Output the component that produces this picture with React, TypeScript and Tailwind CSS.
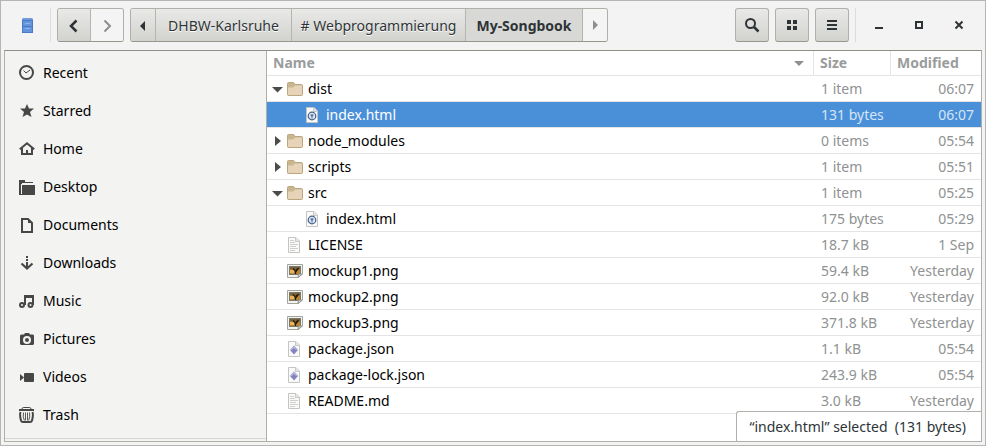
import type { ReactNode } from "react";

type IconName = "recent" | "starred" | "home" | "desktop" | "documents" | "downloads" | "music" | "pictures" | "videos" | "trash";

const placeArt: Record<IconName, ReactNode> = {
  recent: (
    <>
      <circle cx="7.5" cy="7.5" r="6.5" fill="none" stroke="currentColor" strokeWidth="2" />
      <path d="M4.5 5.5 7 8l4-3" fill="none" stroke="currentColor" strokeWidth="1" />
    </>
  ),
  starred: <path d="M8 1l2 4.500h5l-4 3.500 1.500 5L8 11.500 3.500 14 5 9 1 5.500h5z" />,
  home: (
    <>
      <path d="M.8 8.300 8 2.200l7.200 6.100" fill="none" stroke="currentColor" strokeWidth="2" />
      <path d="M3 7v6h10V7" fill="none" stroke="currentColor" strokeWidth="2" />
      <path d="M7 9h2v4H7z" />
    </>
  ),
  desktop: (
    <>
      <path d="M0 1h6v2h8v1H3v1H2v11H0z" />
      <path d="M3 6h13v10H0v-1h3z" />
    </>
  ),
  documents: (
    <>
      <path d="M3 2h6l4 4v9H3z" fill="none" stroke="currentColor" strokeWidth="2" />
      <path d="M9 2v4h4z" />
    </>
  ),
  downloads: (
    <>
      <path d="M7 1h2v2H7zM7 4h2v2H7zM7 7h2v5H7z" />
      <path d="M2.500 8.500l5.500 5 5.500-5" fill="none" stroke="currentColor" strokeWidth="2.200" />
    </>
  ),
  music: (
    <>
      <circle cx="3" cy="12" r="2" fill="none" stroke="currentColor" strokeWidth="2" />
      <circle cx="11.500" cy="12" r="2" fill="none" stroke="currentColor" strokeWidth="2" />
      <path d="M5 2h10v10h-2V5H7v7H5z" />
    </>
  ),
  pictures: (
    <path
      fillRule="evenodd"
      d="M6 2h4l1 1.500h3l1 1V13l-1 1H2l-1-1V4.500l1-1h3zM8 5a4 4 0 1 0 0 8 4 4 0 0 0 0-8zm0 2a2 2 0 1 1 0 4 2 2 0 0 1 0-4z"
    />
  ),
  videos: (
    <>
      <rect x="5" y="4" width="10" height="9" rx="1" />
      <path d="M1 5l4 3.500L1 12z" />
    </>
  ),
  trash: (
    <>
      <path d="M3 2.500V2q0-1.500 1.500-1.500h6Q12 .5 12 2v.5" fill="none" stroke="currentColor" />
      <path d="M0 2h15v2H0z" />
      <path d="M1.500 5q-1 3 .5 8.500.3 1.500 2 1.500h7q1.700 0 2-1.500Q14.500 8 13.500 5" fill="none" stroke="currentColor" strokeWidth="2" />
      <path d="M4.500 5.500q-.8 4 .8 8M6.500 5.500v8M8.500 5.500v8M10.500 5.500q.8 4-.8 8" fill="none" stroke="currentColor" strokeWidth=".9" />
    </>
  ),
};

const places: { label: string; icon: IconName }[] = [
  { label: "Recent", icon: "recent" },
  { label: "Starred", icon: "starred" },
  { label: "Home", icon: "home" },
  { label: "Desktop", icon: "desktop" },
  { label: "Documents", icon: "documents" },
  { label: "Downloads", icon: "downloads" },
  { label: "Music", icon: "music" },
  { label: "Pictures", icon: "pictures" },
  { label: "Videos", icon: "videos" },
  { label: "Trash", icon: "trash" },
];

type Kind = "folder" | "html" | "text" | "image" | "json";

interface Entry {
  name: string;
  kind: Kind;
  size: string;
  modified: string;
  open?: boolean;
  child?: boolean;
  selected?: boolean;
}

const entries: Entry[] = [
  { name: "dist", kind: "folder", size: "1 item", modified: "06:07", open: true },
  { name: "index.html", kind: "html", size: "131 bytes", modified: "06:07", child: true, selected: true },
  { name: "node_modules", kind: "folder", size: "0 items", modified: "05:54" },
  { name: "scripts", kind: "folder", size: "1 item", modified: "05:51" },
  { name: "src", kind: "folder", size: "1 item", modified: "05:25", open: true },
  { name: "index.html", kind: "html", size: "175 bytes", modified: "05:29", child: true },
  { name: "LICENSE", kind: "text", size: "18.7 kB", modified: "1 Sep" },
  { name: "mockup1.png", kind: "image", size: "59.4 kB", modified: "Yesterday" },
  { name: "mockup2.png", kind: "image", size: "92.0 kB", modified: "Yesterday" },
  { name: "mockup3.png", kind: "image", size: "371.8 kB", modified: "Yesterday" },
  { name: "package.json", kind: "json", size: "1.1 kB", modified: "05:54" },
  { name: "package-lock.json", kind: "json", size: "243.9 kB", modified: "05:54" },
  { name: "README.md", kind: "text", size: "3.0 kB", modified: "Yesterday" },
];

function Sheet({ children }: { children: ReactNode }) {
  return (
    <>
      <path d="M1.500.5h7.500l3.500 3.500v11.500h-11z" fill="#fafafa" stroke="#c4c4c0" />
      <path d="M8.500.5v4h4" fill="#e4e4e2" stroke="#c9c9c5" />
      {children}
    </>
  );
}

const fileArt: Record<Kind, ReactNode> = {
  folder: (
    <>
      <path d="M.5 13.500v-11q0-1 1-1H6q1 0 1.500 1l.5 1h6.500q1 0 1 1v9q0 1-1 1h-13q-1 0-1-1z" fill="#c9b68f" stroke="#bba680" />
      <path d="M1 13.500V6.500h5L8 4.500h7v9q0 .5-.5.5h-13z" fill="#e6d3b8" />
    </>
  ),
  html: (
    <Sheet>
      <circle cx="7" cy="9" r="3.800" fill="#dbe4f0" stroke="#44628f" strokeWidth="1.200" />
      <path d="M5 7.500h4L7.500 9.500v2h-1v-2z" fill="#4a6795" />
    </Sheet>
  ),
  text: (
    <Sheet>
      <path d="M3 3.500h4M3 5.500h5M3 7.500h8M3 9.500h6M3 11.500h8M3 13.500h5" stroke="#cfcfcc" />
    </Sheet>
  ),
  image: (
    <>
      <path d="M.5 1.500h15v9l-4 4H.5z" fill="#f2f2ee" stroke="#a3a59d" />
      <path d="M2 3h12v9H2z" fill="#777a72" />
      <path d="M3 4h10v7H3z" fill="#b98432" />
      <path d="M3 4h10v2.500H3z" fill="#7c6238" />
      <path d="M3 7h4v3H3z" fill="#e9b555" />
      <path d="M6 5.500l2.500 2.500v3M9 8.500l2.500-3.500M9 6l1 1.500" fill="none" stroke="#201a12" strokeWidth="1.300" />
      <path d="M11 14.500l.5-3.500h4z" fill="#d8d9d3" stroke="#8f918a" />
    </>
  ),
  json: (
    <Sheet>
      <path d="M7 4.500 11 9l-4 4.500L3 9z" fill="#8583c0" />
      <path d="M7 4.500 11 9H3z" fill="#b5b4dc" />
      <path d="M7 7l2 2-2 2-2-2z" fill="#8381bd" />
    </Sheet>
  ),
};

const raised = "bg-linear-to-b from-[#e9e9e8] to-[#d2d2ce]";
const crumb = `${raised} flex items-center justify-center border-r border-[#b5b5af] pt-px [text-shadow:0_1px_#fff]`;
const tool = `${raised} flex h-[34px] w-[34px] items-center justify-center rounded-[3px] border border-[#b0b0aa] border-b-[#96968c]`;
const cell = "h-[26px] border-b border-[#e4e4e4] p-0 align-middle leading-[25px]";

function NameCell({ entry }: { entry: Entry }) {
  return (
    <div className={entry.child ? "flex items-center pl-[38px]" : "flex items-center pl-[5px]"}>
      {!entry.child && (
        <span className="flex w-[15px] shrink-0">
          {entry.kind === "folder" && (
            <button type="button" aria-label={`Toggle ${entry.name}`} aria-expanded={!!entry.open}>
              <svg width="12" height="12" fill="#4c4c4b">
                <path d={entry.open ? "M0 4h11L5.500 9.500z" : "M3 1l6 5-6 5z"} />
              </svg>
            </button>
          )}
        </span>
      )}
      <svg className="mr-[5px] shrink-0" width="16" height="16" aria-hidden="true">
        {fileArt[entry.kind]}
      </svg>
      {entry.name}
    </div>
  );
}

function Toolbar() {
  return (
    <header className="flex h-[49px] items-center bg-[#f3f3f3] pr-[10px] pb-px pl-[12px] text-[#2e3436]">
      <svg className="mx-[5px]" width="18" height="18" aria-hidden="true">
        <path d="M5 2h9l1 2v13H4V4z" fill="#4a7ac6" />
        <path d="M5 2h9l1 2H4z" fill="#6f9bdd" />
        <path d="M5 5h9v5H5zM5 11h9v5H5z" fill="#6494dc" />
        <path d="M7 7.500h5M7 12.500h5" stroke="#8fb5ec" />
      </svg>
      <span className="ml-[9px] h-[34px] w-px bg-[#dcdcda]" />
      <nav className="ml-[6px] flex h-[34px] w-[67px] overflow-hidden rounded-[3px] border border-[#b0b0aa] border-b-[#96968c]" aria-label="History">
        <button type="button" aria-label="Back" className={`${crumb} w-[33px]`}>
          <svg width="16" height="16" fill="none" stroke="currentColor" strokeWidth="2.500">
            <path d="M10.500 2.500 5 8l5.500 5.500" />
          </svg>
        </button>
        <button type="button" aria-label="Forward" className="flex flex-1 items-center justify-center bg-[#f4f4f4] pt-px text-[#8b8e8f]">
          <svg width="16" height="16" fill="none" stroke="currentColor" strokeWidth="2">
            <path d="M5.500 2.500 11 8l-5.500 5.500" />
          </svg>
        </button>
      </nav>
      <nav className="ml-[6px] flex h-[34px] overflow-hidden rounded-[3px] border border-[#b0b0aa] border-b-[#96968c] whitespace-nowrap" aria-label="Path">
        <button type="button" aria-label="Scroll left" className={`${crumb} w-[25px]`}>
          <svg width="8" height="12" fill="currentColor"><path d="M6 1v10L1 6z" /></svg>
        </button>
        <button type="button" className={`${crumb} w-[136px]`}>DHBW-Karlsruhe</button>
        <button type="button" className={`${crumb} w-[174px]`}># Webprogrammierung</button>
        <button type="button" aria-current="page" className="w-[117px] border-r border-[#b5b5af] bg-[#d8d8d6] pt-px font-bold">My-Songbook</button>
        <button type="button" aria-label="Scroll right" className="flex w-[24px] items-center justify-center bg-[#f4f4f4] text-[#8b8e8f]">
          <svg width="8" height="12" fill="currentColor"><path d="M2 1v10l5-5z" /></svg>
        </button>
      </nav>
      <div className="ml-auto flex items-center gap-[6px]">
        <button type="button" aria-label="Search" className={tool}>
          <svg width="16" height="16" fill="none" stroke="currentColor">
            <circle cx="6.500" cy="6.500" r="4.500" strokeWidth="2" />
            <path d="M10 10l4.500 4.500" strokeWidth="2.500" />
          </svg>
        </button>
        <button type="button" aria-label="Icon view" className={tool}>
          <svg width="16" height="16" fill="currentColor"><path d="M3 3h4v4H3zM9 3h4v4H9zM3 9h4v4H3zM9 9h4v4H9z" /></svg>
        </button>
        <button type="button" aria-label="Menu" className={tool}>
          <svg width="16" height="16" fill="currentColor"><path d="M3 3h10v2H3zM3 7h10v2H3zM3 11h10v2H3z" /></svg>
        </button>
        <span className="h-[34px] w-px bg-[#dcdcda]" />
        <div className="ml-px flex">
          <button type="button" aria-label="Minimize" className="flex w-[40px] justify-center pr-[8px]">
            <svg width="16" height="16" fill="currentColor"><path d="M4 10h8v2H4z" /></svg>
          </button>
          <button type="button" aria-label="Maximize" className="flex w-[40px] justify-center pr-[8px]">
            <svg width="16" height="16" fill="none" stroke="currentColor" strokeWidth="2"><path d="M5 5h6v6H5z" /></svg>
          </button>
          <button type="button" aria-label="Close" className="flex w-[32px] justify-center">
            <svg width="16" height="16" fill="none" stroke="currentColor" strokeWidth="2"><path d="M4.500 4.500l7 7M11.500 4.500l-7 7" /></svg>
          </button>
        </div>
      </div>
    </header>
  );
}

export default function App() {
  return (
    <div className="flex min-h-screen flex-col border border-[#b5b5b3] bg-[#f3f3f3] font-['Noto_Sans',sans-serif] text-[14px]">
      <Toolbar />
      <div className="relative mx-[3px] mb-[3px] flex flex-1 border border-[#b0b0aa] border-t-[#8f8f85]">
        <aside className="flex w-[262px] shrink-0 flex-col border-r border-[#b0b0aa] bg-[#f3f3f2] pt-[2px]">
          <ul className="pb-[5px]">
            {places.map((place) => (
              <li key={place.label}>
                <a href="#" className="flex h-[38px] items-center gap-[8px] pl-[14px] text-black">
                  <svg width="16" height="18" viewBox="0 -2 16 18" fill="currentColor" className="text-[#474745]" aria-hidden="true">
                    {placeArt[place.icon]}
                  </svg>
                  {place.label}
                </a>
              </li>
            ))}
          </ul>
          <div className="h-[3px] border-t border-[#d6d6d3]" />
        </aside>
        <main className="min-w-0 flex-1 bg-white">
          <table className="w-full table-fixed border-separate border-spacing-0 text-left">
            <colgroup>
              <col />
              <col className="w-[77px]" />
              <col className="w-[91px]" />
            </colgroup>
            <thead className="text-[#9a9c9c]">
              <tr>
                <th className="h-[25px] border-b border-[#e4e4e4] p-0 leading-[24px]">
                  <span className="flex items-center justify-between pr-[8px] pl-[6px]">
                    Name
                    <svg width="12" height="12" fill="#8e9192"><path d="M1 4h10L6 9z" /></svg>
                  </span>
                </th>
                <th className="border-b border-l border-[#e4e4e4] p-0 pl-[6px] leading-[24px]">Size</th>
                <th className="border-b border-l border-[#e4e4e4] p-0 pl-[6px] leading-[24px]">Modified</th>
              </tr>
            </thead>
            <tbody>
              {entries.map((entry, i) => (
                <tr
                  key={i}
                  aria-selected={!!entry.selected}
                  className={entry.selected ? "bg-[#4a90d9] text-[#d5e5f6]" : "text-[#8f9292]"}
                >
                  <td className={`${cell} ${entry.selected ? "text-white" : "text-black"}`}>
                    <NameCell entry={entry} />
                  </td>
                  <td className={`${cell} pl-[8px]`}>{entry.size}</td>
                  <td className={`${cell} pr-[7px] text-right`}>{entry.modified}</td>
                </tr>
              ))}
            </tbody>
          </table>
        </main>
        <div role="status" className="absolute right-0 bottom-0 rounded-tl-[3px] border-t border-l border-[#b0b0aa] bg-white pr-[15px] pl-[12px] leading-[29px] whitespace-pre text-[#2e3436]">
          “index.html” selected  (131 bytes)
        </div>
      </div>
    </div>
  );
}
